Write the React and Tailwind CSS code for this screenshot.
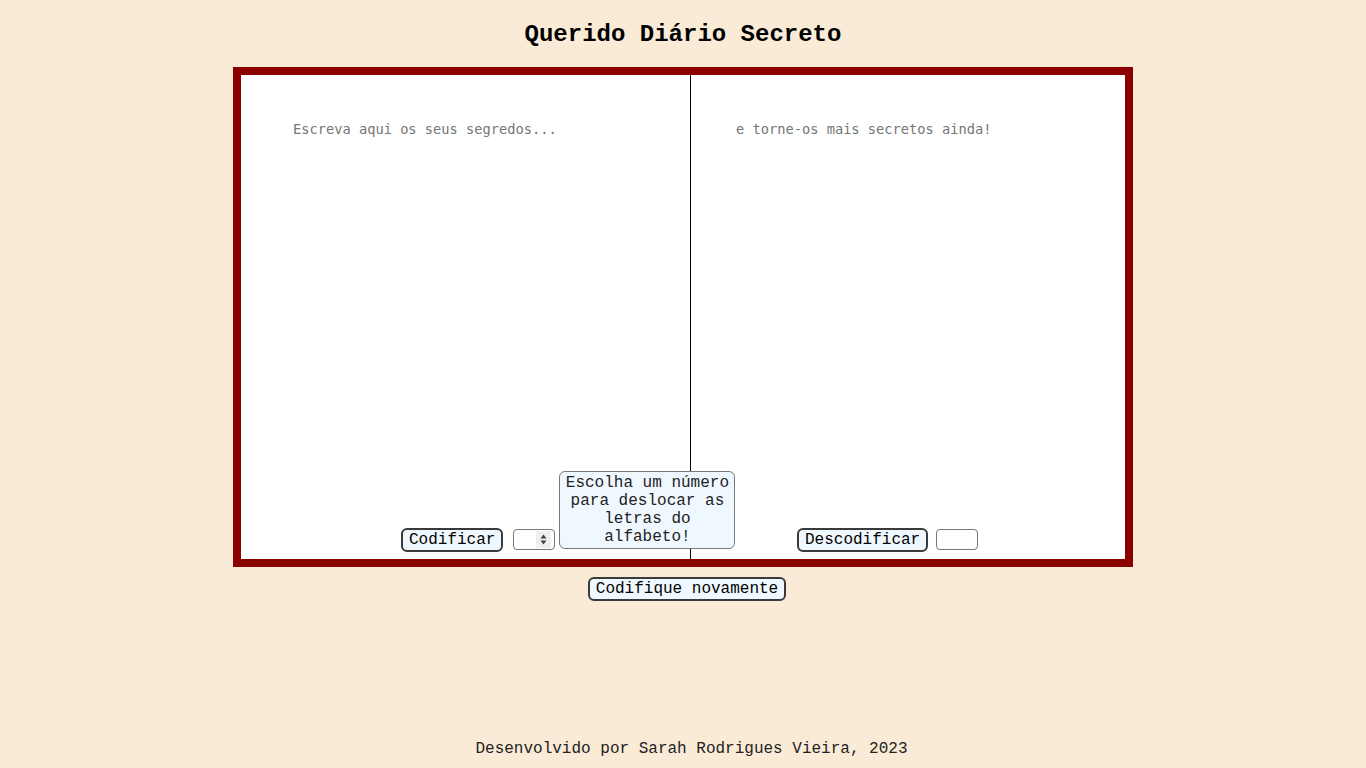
import React, { useState } from 'react';

const mono = { fontFamily: '"Liberation Mono", "Courier New", monospace' };

const Btn = ({ children, onClick }) => (
  <button
    onClick={onClick}
    className="h-6 px-1.5 border-2 border-[#3a3a3a] rounded-md bg-[#f0f8ff] text-[16px] leading-5 text-black"
    style={mono}
  >
    {children}
  </button>
);

const App = () => {
  const [texto, setTexto] = useState('');
  const [saida, setSaida] = useState('');

  return (
    <div className="min-h-screen bg-[#faebd7] flex flex-col items-center" style={mono}>
      <h1 className="pt-[17px] text-[24px] leading-9 font-bold text-black">Querido Diário Secreto</h1>

      <div className="mt-[14px] w-[900px] h-[500px] border-8 border-[#8b0000] bg-white flex">
        <div className="w-[450px] border-r border-black flex flex-col">
          <textarea
            value={texto}
            onChange={(e) => setTexto(e.target.value)}
            placeholder="Escreva aqui os seus segredos..."
            className="flex-1 resize-none outline-none pl-[52px] pt-[46px] pr-4 text-[13.7px] leading-4 placeholder:text-[#767676]"
            style={{ fontFamily: '"DejaVu Sans Mono", monospace' }}
          />
          <div className="flex items-center pl-[160px] pb-[7px] h-8">
            <Btn>Codificar</Btn>
            <div className="relative ml-2.5">
              <div className="w-[42px] h-[21px] border border-[#767676] rounded-sm bg-white flex items-center justify-end pr-[3px]">
                <div className="w-[15px] h-[17px] bg-[#efefef] flex items-center justify-center">
                  <svg width="7" height="11" viewBox="0 0 7 11">
                    <path d="M3.5 0.5 L6.5 4.5 L0.5 4.5 Z" fill="#444" />
                    <path d="M3.5 10.5 L6.5 6.5 L0.5 6.5 Z" fill="#444" />
                  </svg>
                </div>
              </div>
              <div className="absolute left-[46px] bottom-[1px] w-[176px] px-[5px] py-[2px] border border-[#777] rounded-md bg-[#f0f8ff] text-center text-[16px] leading-[18px] text-[#222] z-10">
                Escolha um número para deslocar as letras do alfabeto!
              </div>
            </div>
          </div>
        </div>
        <div className="flex-1 flex flex-col">
          <textarea
            value={saida}
            onChange={(e) => setSaida(e.target.value)}
            placeholder="e torne-os mais secretos ainda!"
            className="flex-1 resize-none outline-none pl-[45px] pt-[46px] pr-4 text-[13.7px] leading-4 placeholder:text-[#767676]"
            style={{ fontFamily: '"DejaVu Sans Mono", monospace' }}
          />
          <div className="flex items-center pl-[106px] pb-[7px] h-8">
            <Btn>Descodificar</Btn>
            <input type="text" className="ml-2 w-[42px] h-[21px] border border-[#767676] rounded-sm outline-none" />
          </div>
        </div>
      </div>

      <div className="mt-[10px] ml-2">
        <Btn>Codifique novamente</Btn>
      </div>

      <footer className="mt-auto ml-[17px] pb-[7px] text-[16px] leading-6 text-[#222]">
        Desenvolvido por Sarah Rodrigues Vieira, 2023
      </footer>
    </div>
  );
};

export default App;
